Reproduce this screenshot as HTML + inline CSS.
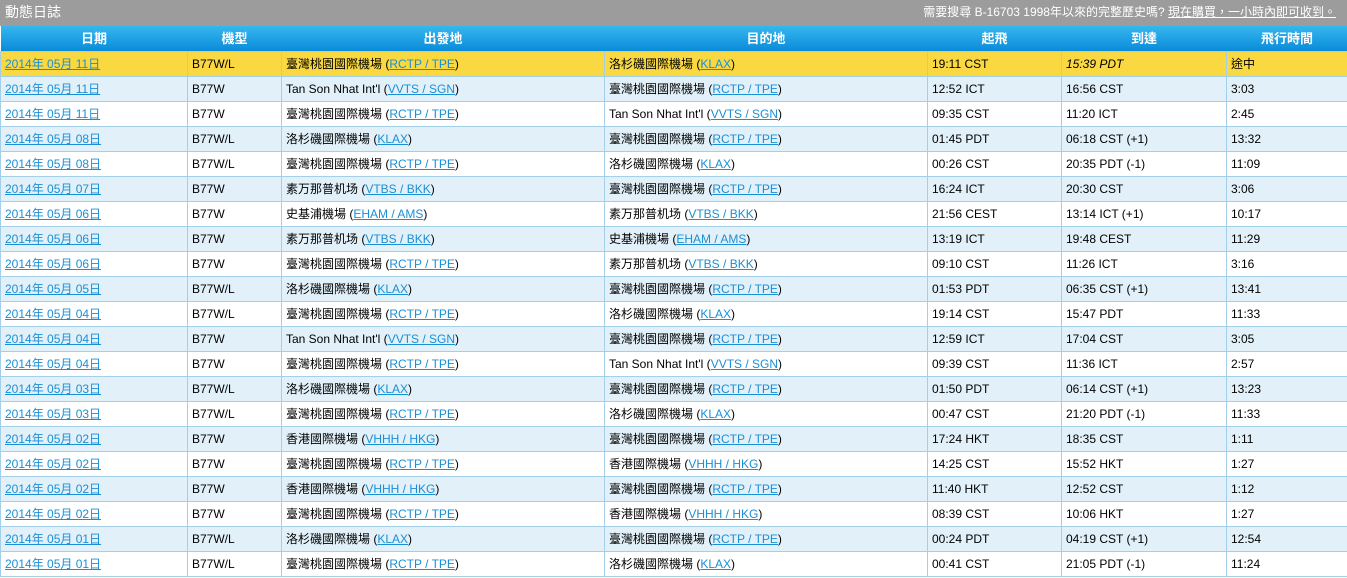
<!DOCTYPE html><html><head><meta charset="utf-8"><style>
body{margin:0;width:1347px;height:578px;overflow:hidden;background:#fff;font-family:"Liberation Sans","Noto Sans CJK TC",sans-serif;font-size:12px;color:#000}
.top{height:26px;background:#9c9c9c;color:#fff;position:relative}
.top .t{position:absolute;left:5px;top:4px;font-size:14px;line-height:17px}
.top .r{position:absolute;right:11px;top:5px;font-size:12px;line-height:14px}
.top .r u{color:#fff}
table{border-collapse:collapse;table-layout:fixed;width:1347px}
th{height:25px;padding:0;background:linear-gradient(#36b7ef,#0a8bd9);color:#fff;font-size:13px;font-weight:bold;text-align:center;border:none;line-height:16px}
td{height:24px;padding:0 0 0 4px;border:1px solid #a3cfe8;white-space:nowrap;overflow:hidden;line-height:14px;vertical-align:middle}
tr.y td{background:#f9d842}
tr.b td{background:#e2f1f9}
a{color:#1a8fd6;text-decoration:underline}
</style></head><body>
<div class="top"><span class="t">動態日誌</span><span class="r">需要搜尋 B-16703 1998年以來的完整歷史嗎? <u>現在購買，一小時內即可收到。</u></span></div>
<table>
<colgroup><col style="width:187px"><col style="width:94px"><col style="width:323px"><col style="width:323px"><col style="width:134px"><col style="width:165px"><col style="width:121px"></colgroup>
<tr><th>日期</th><th>機型</th><th>出發地</th><th>目的地</th><th>起飛</th><th>到達</th><th>飛行時間</th></tr>
<tr class="y"><td><a>2014年 05月 11日</a></td><td>B77W/L</td><td>臺灣桃園國際機場 (<a>RCTP / TPE</a>)</td><td>洛杉磯國際機場 (<a>KLAX</a>)</td><td>19:11 CST</td><td><i>15:39 PDT</i></td><td>途中</td></tr>
<tr class="b"><td><a>2014年 05月 11日</a></td><td>B77W</td><td>Tan Son Nhat Int'l (<a>VVTS / SGN</a>)</td><td>臺灣桃園國際機場 (<a>RCTP / TPE</a>)</td><td>12:52 ICT</td><td>16:56 CST</td><td>3:03</td></tr>
<tr><td><a>2014年 05月 11日</a></td><td>B77W</td><td>臺灣桃園國際機場 (<a>RCTP / TPE</a>)</td><td>Tan Son Nhat Int'l (<a>VVTS / SGN</a>)</td><td>09:35 CST</td><td>11:20 ICT</td><td>2:45</td></tr>
<tr class="b"><td><a>2014年 05月 08日</a></td><td>B77W/L</td><td>洛杉磯國際機場 (<a>KLAX</a>)</td><td>臺灣桃園國際機場 (<a>RCTP / TPE</a>)</td><td>01:45 PDT</td><td>06:18 CST (+1)</td><td>13:32</td></tr>
<tr><td><a>2014年 05月 08日</a></td><td>B77W/L</td><td>臺灣桃園國際機場 (<a>RCTP / TPE</a>)</td><td>洛杉磯國際機場 (<a>KLAX</a>)</td><td>00:26 CST</td><td>20:35 PDT (-1)</td><td>11:09</td></tr>
<tr class="b"><td><a>2014年 05月 07日</a></td><td>B77W</td><td>素万那普机场 (<a>VTBS / BKK</a>)</td><td>臺灣桃園國際機場 (<a>RCTP / TPE</a>)</td><td>16:24 ICT</td><td>20:30 CST</td><td>3:06</td></tr>
<tr><td><a>2014年 05月 06日</a></td><td>B77W</td><td>史基浦機場 (<a>EHAM / AMS</a>)</td><td>素万那普机场 (<a>VTBS / BKK</a>)</td><td>21:56 CEST</td><td>13:14 ICT (+1)</td><td>10:17</td></tr>
<tr class="b"><td><a>2014年 05月 06日</a></td><td>B77W</td><td>素万那普机场 (<a>VTBS / BKK</a>)</td><td>史基浦機場 (<a>EHAM / AMS</a>)</td><td>13:19 ICT</td><td>19:48 CEST</td><td>11:29</td></tr>
<tr><td><a>2014年 05月 06日</a></td><td>B77W</td><td>臺灣桃園國際機場 (<a>RCTP / TPE</a>)</td><td>素万那普机场 (<a>VTBS / BKK</a>)</td><td>09:10 CST</td><td>11:26 ICT</td><td>3:16</td></tr>
<tr class="b"><td><a>2014年 05月 05日</a></td><td>B77W/L</td><td>洛杉磯國際機場 (<a>KLAX</a>)</td><td>臺灣桃園國際機場 (<a>RCTP / TPE</a>)</td><td>01:53 PDT</td><td>06:35 CST (+1)</td><td>13:41</td></tr>
<tr><td><a>2014年 05月 04日</a></td><td>B77W/L</td><td>臺灣桃園國際機場 (<a>RCTP / TPE</a>)</td><td>洛杉磯國際機場 (<a>KLAX</a>)</td><td>19:14 CST</td><td>15:47 PDT</td><td>11:33</td></tr>
<tr class="b"><td><a>2014年 05月 04日</a></td><td>B77W</td><td>Tan Son Nhat Int'l (<a>VVTS / SGN</a>)</td><td>臺灣桃園國際機場 (<a>RCTP / TPE</a>)</td><td>12:59 ICT</td><td>17:04 CST</td><td>3:05</td></tr>
<tr><td><a>2014年 05月 04日</a></td><td>B77W</td><td>臺灣桃園國際機場 (<a>RCTP / TPE</a>)</td><td>Tan Son Nhat Int'l (<a>VVTS / SGN</a>)</td><td>09:39 CST</td><td>11:36 ICT</td><td>2:57</td></tr>
<tr class="b"><td><a>2014年 05月 03日</a></td><td>B77W/L</td><td>洛杉磯國際機場 (<a>KLAX</a>)</td><td>臺灣桃園國際機場 (<a>RCTP / TPE</a>)</td><td>01:50 PDT</td><td>06:14 CST (+1)</td><td>13:23</td></tr>
<tr><td><a>2014年 05月 03日</a></td><td>B77W/L</td><td>臺灣桃園國際機場 (<a>RCTP / TPE</a>)</td><td>洛杉磯國際機場 (<a>KLAX</a>)</td><td>00:47 CST</td><td>21:20 PDT (-1)</td><td>11:33</td></tr>
<tr class="b"><td><a>2014年 05月 02日</a></td><td>B77W</td><td>香港國際機場 (<a>VHHH / HKG</a>)</td><td>臺灣桃園國際機場 (<a>RCTP / TPE</a>)</td><td>17:24 HKT</td><td>18:35 CST</td><td>1:11</td></tr>
<tr><td><a>2014年 05月 02日</a></td><td>B77W</td><td>臺灣桃園國際機場 (<a>RCTP / TPE</a>)</td><td>香港國際機場 (<a>VHHH / HKG</a>)</td><td>14:25 CST</td><td>15:52 HKT</td><td>1:27</td></tr>
<tr class="b"><td><a>2014年 05月 02日</a></td><td>B77W</td><td>香港國際機場 (<a>VHHH / HKG</a>)</td><td>臺灣桃園國際機場 (<a>RCTP / TPE</a>)</td><td>11:40 HKT</td><td>12:52 CST</td><td>1:12</td></tr>
<tr><td><a>2014年 05月 02日</a></td><td>B77W</td><td>臺灣桃園國際機場 (<a>RCTP / TPE</a>)</td><td>香港國際機場 (<a>VHHH / HKG</a>)</td><td>08:39 CST</td><td>10:06 HKT</td><td>1:27</td></tr>
<tr class="b"><td><a>2014年 05月 01日</a></td><td>B77W/L</td><td>洛杉磯國際機場 (<a>KLAX</a>)</td><td>臺灣桃園國際機場 (<a>RCTP / TPE</a>)</td><td>00:24 PDT</td><td>04:19 CST (+1)</td><td>12:54</td></tr>
<tr><td><a>2014年 05月 01日</a></td><td>B77W/L</td><td>臺灣桃園國際機場 (<a>RCTP / TPE</a>)</td><td>洛杉磯國際機場 (<a>KLAX</a>)</td><td>00:41 CST</td><td>21:05 PDT (-1)</td><td>11:24</td></tr>
</table></body></html>
